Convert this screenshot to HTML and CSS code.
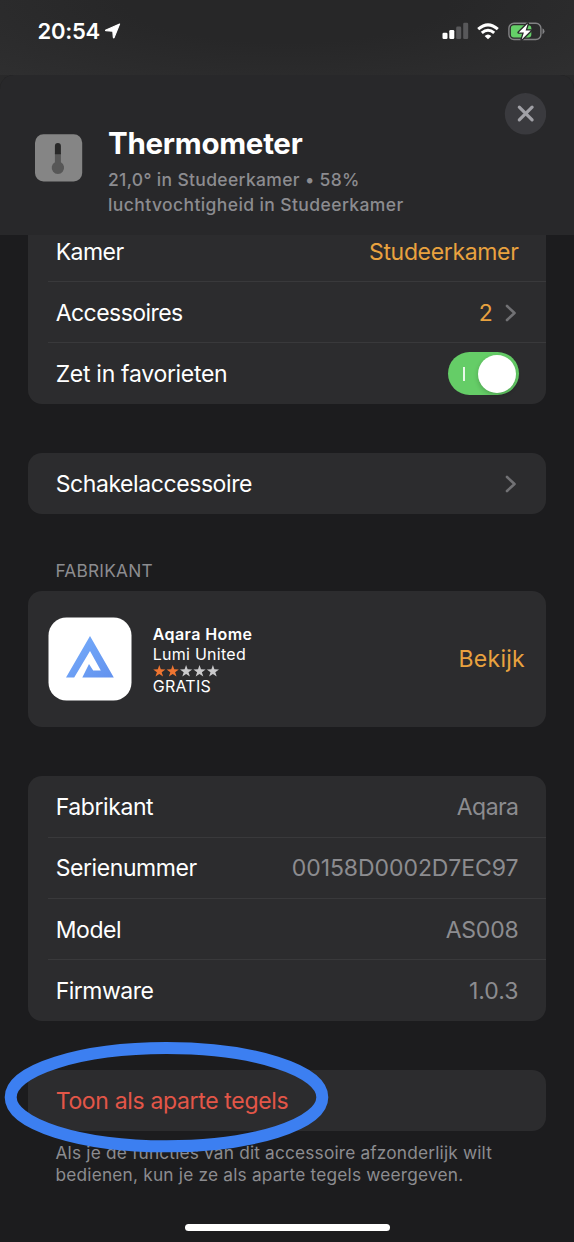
FILE: index.html
```html
<!DOCTYPE html>
<html lang="nl">
<head>
<meta charset="utf-8">
<title>Thermometer</title>
<link rel="stylesheet" href="styles.css">
</head>
<body>
<div class="status">
  <div class="clock"><span class="time">20:54</span>
    <svg class="location" width="16" height="16" viewBox="0 0 16 16"><path d="M14.6 1 9.2 14.4q-.5 1-.9 0L7.8 8.3 1 7.8q-1-.4 0-.9Z" fill="#fff" stroke="#fff" stroke-width="1.1" stroke-linejoin="round"/></svg>
  </div>
  <div class="indicators">
    <svg width="27" height="18" viewBox="0 0 27 18"><g fill="#fff"><rect x=".5" y="10.7" width="5" height="6.3" rx="1.3"/><rect x="7.3" y="7.9" width="5" height="9.1" rx="1.3"/></g><g fill="#58585a"><rect x="14.2" y="4.6" width="5" height="12.4" rx="1.3"/><rect x="21.2" y=".7" width="5" height="16.3" rx="1.3"/></g></svg>
    <svg class="wifi" width="22" height="17" viewBox="0 0 22 17"><g fill="none" stroke="#fff" stroke-width="3"><path d="M1.2 6.1Q11-2.4 20.8 6.1"/><path d="M4.8 9.9Q11 4.5 17.2 9.9"/></g><path d="M11 16.3 7.6 12.9Q11 9.9 14.4 12.9Z" fill="#fff"/></svg>
    <svg class="battery" width="37" height="19" viewBox="0 0 37 19"><rect x=".9" y="1.2" width="32" height="16.3" rx="5" fill="none" stroke="#828284" stroke-width="1.4"/><rect x="2.9" y="3.2" width="20.4" height="12.3" rx="3" fill="#65cf68"/><path d="M34.5 6.3q2 1 2 3t-2 3Z" fill="#828284"/><path d="M19.8 1.5 10.7 10.5h5.2L13.7 17.6 22.8 8.6h-5.2Z" fill="#fff" stroke="#29292a" stroke-width="2.6" stroke-linejoin="round" paint-order="stroke"/></svg>
  </div>
</div>
<main class="sheet">
  <header class="header">
    <svg class="tile" width="48" height="48" viewBox="0 0 48 48"><rect x="0" y=".3" width="47.2" height="47.2" rx="8.5" fill="#858585"/><path d="M19.9 19v9.3a6.2 6.2 0 1 0 6 0V19Z" fill="#575757"/><path d="M19.9 20.2v-8.3a3 3 0 0 1 6 0v8.3Z" fill="#282828"/></svg>
    <div class="heading">
      <h1 class="title">Thermometer</h1>
      <p class="subtitle"><span class="sub-a">21,0° in Studeerkamer • 58%</span><br><span class="sub-b">luchtvochtigheid in Studeerkamer</span></p>
    </div>
    <div class="close"><svg width="42" height="42" viewBox="0 0 42 42"><circle cx="21.5" cy="20.8" r="20.7" fill="#3a3a3e"/><path d="m15.3 14.1 12.8 12.8m0-12.8L15.3 26.9" stroke="#a0a0a6" stroke-width="3.2" stroke-linecap="round"/></svg></div>
  </header>
  <section class="card settings">
    <div class="row"><span class="kamer">Kamer</span><span class="accent room">Studeerkamer</span></div>
    <div class="row"><span class="accessories">Accessoires</span><span class="accent count">2<svg class="chevron" width="12" height="18" viewBox="0 0 12 18"><path d="m2 2 7.5 7L2 16"/></svg></span></div>
    <div class="row"><span class="favorite">Zet in favorieten</span><span class="toggle"><span class="mark"></span><span class="knob"></span></span></div>
  </section>
  <section class="card single"><div class="row"><span class="switch">Schakelaccessoire</span><svg class="chevron" width="12" height="18" viewBox="0 0 12 18"><path d="m2 2 7.5 7L2 16"/></svg></div></section>
  <h2 class="label">FABRIKANT</h2>
  <section class="card app">
    <svg class="logo" width="84" height="84" viewBox="0 0 84 84"><defs><linearGradient id="blue" x1="0" y1="0" x2="1" y2="1"><stop offset="0" stop-color="#76adfb"/><stop offset="1" stop-color="#6392ee"/></linearGradient></defs><rect x=".5" y=".5" width="83" height="83" rx="18" fill="#fff"/><path d="M42 19 65.8 60.5H34.3L41 47 45.2 53.6H52.8L42 34 26.2 60.5H18Z" fill="url(#blue)"/></svg>
    <div class="app-text">
      <strong class="app-name">Aqara Home</strong>
      <span class="vendor">Lumi United</span>
      <svg class="stars" width="67" height="12" viewBox="0 0 67 12"><defs><path id="star" d="m6.3 0 1.5 4.3 4.6.1-3.7 2.8 1.4 4.4-3.8-2.6-3.8 2.6 1.4-4.4L.2 4.4l4.6-.1Z"/></defs><g fill="#ef7531"><use href="#star"/><use href="#star" x="13.4"/></g><g fill="#cacacc"><use href="#star" x="26.8"/><use href="#star" x="40.2"/><use href="#star" x="53.6"/></g></svg>
      <span class="price">GRATIS</span>
    </div>
    <span class="accent view">Bekijk</span>
  </section>
  <section class="card details">
    <div class="row"><span class="maker">Fabrikant</span><span class="muted aqara">Aqara</span></div>
    <div class="row"><span class="serial-label">Serienummer</span><span class="muted serial">00158D0002D7EC97</span></div>
    <div class="row"><span class="model-label">Model</span><span class="muted model">AS008</span></div>
    <div class="row"><span class="firmware-label">Firmware</span><span class="muted firmware">1.0.3</span></div>
  </section>
  <section class="card split"><div class="row"><span class="split-text">Toon als aparte tegels</span></div>
    <svg class="ring" width="326" height="112" viewBox="0 0 326 112"><ellipse cx="162.5" cy="55.2" rx="155.8" ry="49.1" fill="none" stroke="#3c7ff1" stroke-width="12"/></svg>
  </section>
  <p class="note"><span class="note-a">Als je de functies van dit accessoire afzonderlijk wilt</span><br><span class="note-b">bedienen, kun je ze als aparte tegels weergeven.</span></p>
  <div class="home"></div>
</main>
</body>
</html>
```
FILE: styles.css
```css
* { box-sizing: border-box; }
body { margin: 0; width: 574px; height: 1242px; overflow: hidden; background: #29292a; color: #fff; font: 400 23px/28px Inter, "Liberation Sans", sans-serif; }
.status { height: 75px; padding: 17px 29px 0 37.5px; display: flex; justify-content: space-between; background: radial-gradient(ellipse at 50% 0, #272728 40%, #303031 110%); }
.clock { display: flex; gap: 5px; height: 28px; }
.time { font-size: 22px; font-weight: 600; line-height: 29px; letter-spacing: -.25px; }
.location { margin-top: 6px; }
.indicators { display: flex; align-items: flex-start; padding-top: 5px; }
.indicators svg { flex: none; }
.indicators .wifi { margin: 1px 9px 0 8px; }
.sheet { height: 1167px; display: flex; flex-direction: column; background: #1c1c1e; border-radius: 14px 14px 0 0; }
.header { height: 159.5px; flex: none; padding: 18px 28px 0 35px; display: flex; background: #28282a; border-radius: 14px 14px 0 0; }
.tile { margin-top: 41px; flex: none; }
.heading { margin: 32px 0 0 25px; flex: 1; white-space: nowrap; }
.title { margin: 0; font-size: 29.5px; line-height: 36px; font-weight: 700; letter-spacing: -.28px; }
.subtitle { margin: 7px 0 0; color: #8c8c90; font-size: 17.5px; font-weight: 500; line-height: 24.5px; }
.sub-a { letter-spacing: .33px; }
.sub-b { letter-spacing: .4px; }
.close { width: 42px; height: 42px; }
.card { width: 518px; flex: none; margin: 0 28px; background: #2c2c2e; border-radius: 14px; }
.row { height: 61.3px; margin-left: 20px; padding: 1px 27.5px 0 7.7px; display: flex; align-items: center; justify-content: space-between; white-space: nowrap; }
.row + .row { border-top: 1px solid #39393b; }
.settings { height: 169px; border-radius: 0 0 14px 14px; }
.settings .row:first-child { height: 46.5px; padding-bottom: 13px; }
.accent { color: #e9a23f; }
.muted { color: #8c8c90; }
.kamer { letter-spacing: -.55px; }
.room { letter-spacing: -.34px; }
.accessories { letter-spacing: -.55px; }
.favorite { letter-spacing: -.3px; }
.switch { letter-spacing: -.42px; }
.count { display: flex; align-items: center; gap: 12px; }
.chevron { margin-right: 1.7px; fill: none; stroke: #717174; stroke-width: 2.6; stroke-linecap: round; stroke-linejoin: round; }
.toggle { width: 71px; height: 43px; border-radius: 22px; background: #65cd67; display: flex; align-items: center; padding: 0 2.5px 0 15px; justify-content: space-between; }
.mark { width: 2px; height: 14px; background: #e8f8e9; }
.knob { width: 38px; height: 38px; border-radius: 50%; background: #fff; box-shadow: 0 2px 5px #0003; }
.single { margin-top: 49px; height: 61.5px; }
.label { margin: 46px 0 10px 55.5px; height: 20.5px; font-size: 17.3px; line-height: 21px; font-weight: 400; letter-spacing: .22px; color: #8c8c90; }
.app { height: 136px; display: flex; align-items: center; padding: 0 21px 0 20px; }
.app-text { display: flex; flex-direction: column; margin-left: 20.7px; flex: 1; font-size: 16px; line-height: 20.5px; padding-top: 2px; }
.app-name { font-size: 16px; font-weight: 600; line-height: 20.5px; letter-spacing: .42px; }
.vendor { letter-spacing: .27px; }
.price { line-height: 19px; letter-spacing: .25px; }
.view { letter-spacing: .28px; }
.details { margin-top: 49px; height: 245.3px; }
.maker, .serial-label, .model-label { letter-spacing: -.42px; }
.firmware-label { letter-spacing: -.5px; }
.aqara { letter-spacing: -.55px; }
.serial { letter-spacing: -.07px; }
.model { letter-spacing: -.2px; }
.split { position: relative; margin-top: 49px; height: 61.3px; }
.split-text { color: #e35648; letter-spacing: -.34px; }
.ring { position: absolute; left: -24px; top: -28px; }
.note { margin: 10.5px 0 0 55.5px; font-size: 17.3px; line-height: 22.5px; color: #8c8c90; white-space: nowrap; }
.note-a { letter-spacing: .17px; }
.note-b { letter-spacing: .19px; }
.home { width: 205px; height: 7px; border-radius: 4px; background: #fff; margin: auto auto 11px; }
```
